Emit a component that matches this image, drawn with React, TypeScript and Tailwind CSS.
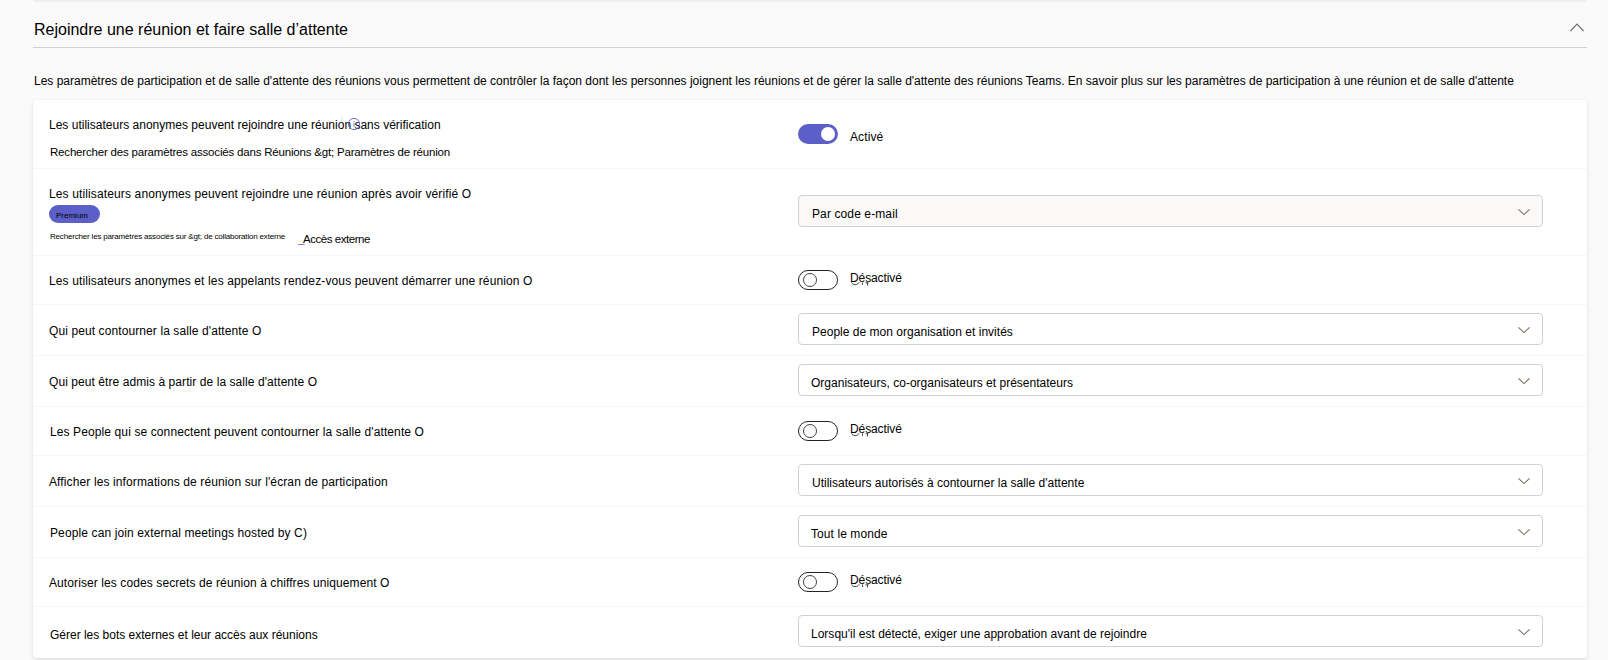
import { ReactNode } from 'react'
import clsx from 'clsx'

// 向下箭头
function ChevronDown() {
  return (
    <svg className="mt-[13px] h-[7px] w-3 shrink-0" viewBox="0 0 12 7" fill="none">
      <path d="M0.4 0.4 6 5.6 11.6 0.4" stroke="#7d716c" strokeWidth="1.1" />
    </svg>
  )
}

function Toggle({ on }: { on?: boolean }) {
  if (on) {
    return (
      <div className="flex h-5 w-10 items-center justify-end rounded-full bg-[#5b5fc7] pr-[3px]">
        <div className="h-3.5 w-3.5 rounded-full bg-white"></div>
      </div>
    )
  }
  return (
    <div className="flex h-5 w-10 items-center rounded-full border border-[#242424] pl-1">
      <div className="h-3.5 w-3.5 rounded-full border border-[#424242]"></div>
    </div>
  )
}

function ToggleField({ on }: { on?: boolean }) {
  if (on) {
    return (
      <div className="flex pt-6">
        <Toggle on />
        <span className="ml-3 pt-[5px] tracking-[0.1px]">Activé</span>
      </div>
    )
  }
  return (
    <div className="flex pt-3.5">
      <Toggle />
      <span className="relative ml-3 tracking-[-0.1px]">
        Désactivé
        <svg className="absolute top-[12px] left-[1px] h-[4px] w-[20px]" viewBox="0 0 20 4" fill="none">
          <path d="M0.5 0.3C1.5 3.3 6.5 3.6 8.2 0.3M11.5 0.5v2.4M16.5 0.5v3M14.5 0.8h3" stroke="#444" strokeWidth="1" />
        </svg>
      </span>
    </div>
  )
}

function Select({ value, className, disabled }: { value: string; className?: string; disabled?: boolean }) {
  return (
    <div
      className={clsx(
        'flex h-8 w-[745px] items-start justify-between rounded border border-[#d1d1d1] pr-3',
        disabled ? 'bg-[#faf9f8]' : 'bg-white'
      )}
    >
      <span className={clsx('pt-[10px]', className)}>{value}</span>
      <ChevronDown />
    </div>
  )
}

function Row({ label, className, children }: { label: ReactNode; className: string; children: ReactNode }) {
  return (
    <div className={clsx('flex items-start border-b border-[#f7f7f7] last:border-b-0', className)}>
      <div className="w-[765px] shrink-0">{label}</div>
      {children}
    </div>
  )
}

const settings = [
  {
    label: 'Les utilisateurs anonymes et les appelants rendez-vous peuvent démarrer une réunion O',
    labelClass: 'pt-[17px] pl-4 tracking-[0.125px]',
    height: 'h-[49px]'
  },
  {
    label: "Qui peut contourner la salle d'attente O",
    labelClass: 'pt-[18px] pl-4 tracking-[0.1px]',
    height: 'h-[51px]',
    value: 'People de mon organisation et invités',
    valueClass: 'pl-[13px] tracking-[0.02px]'
  },
  {
    label: "Qui peut être admis à partir de la salle d'attente O",
    labelClass: 'pt-[18px] pl-4 tracking-[0.07px]',
    height: 'h-[51px]',
    value: 'Organisateurs, co-organisateurs et présentateurs',
    valueClass: 'pl-3 tracking-[0.01px]'
  },
  {
    label: "Les People qui se connectent peuvent contourner la salle d'attente O",
    labelClass: 'pt-[17px] pl-[17px] tracking-[0.11px]',
    height: 'h-[49px]'
  },
  {
    label: "Afficher les informations de réunion sur l'écran de participation",
    labelClass: 'pt-[18px] pl-4 tracking-[0.12px]',
    height: 'h-[51px]',
    value: "Utilisateurs autorisés à contourner la salle d'attente",
    valueClass: 'pl-[13px] tracking-[0.01px]'
  },
  {
    label: 'People can join external meetings hosted by C)',
    labelClass: 'pt-[18px] pl-[17px] tracking-[0.12px]',
    height: 'h-[51px]',
    value: 'Tout le monde',
    valueClass: 'pl-3 tracking-[0.08px]'
  },
  {
    label: 'Autoriser les codes secrets de réunion à chiffres uniquement O',
    labelClass: 'pt-[17px] pl-4 tracking-[0.095px]',
    height: 'h-[49px]'
  },
  {
    label: 'Gérer les bots externes et leur accès aux réunions',
    labelClass: 'pt-5 pl-[17px] tracking-[-0.01px]',
    height: 'h-[51px]',
    value: "Lorsqu'il est détecté, exiger une approbation avant de rejoindre",
    valueClass: 'pl-3 tracking-[0.01px]'
  }
]

export default function App() {
  return (
    <div className="h-[660px] w-[1608px] overflow-hidden bg-[#fafafa] pr-[21px] pl-[33px] font-['Liberation_Sans',Arial,sans-serif] text-xs leading-4 whitespace-nowrap text-black">
      {/* 上一张卡片的阴影 */}
      <div className="h-px rounded-b bg-[#ededed] shadow-[0_1px_2px_rgba(0,0,0,0.06)]"></div>

      {/* 标题 */}
      <div className="flex h-[47px] items-start justify-between border-b border-[#d1d1d1] pr-[3px]">
        <h2 className="pt-[19px] pl-px text-base leading-5">Rejoindre une réunion et faire salle d’attente</h2>
        <svg className="mt-[22px] h-[9px] w-[14px]" viewBox="0 0 14 9" fill="none">
          <path d="M0.4 8 7 1.2 13.6 8" stroke="#707070" strokeWidth="1.2" />
        </svg>
      </div>

      <p className="h-[52px] pt-[25px] pl-px tracking-[-0.006px]">
        Les paramètres de participation et de salle d'attente des réunions vous permettent de contrôler la façon dont les
        personnes joignent les réunions et de gérer la salle d'attente des réunions Teams. En savoir plus sur les
        paramètres de participation à une réunion et de salle d'attente
      </p>

      {/* 设置列表 */}
      <div className="h-[558px] rounded bg-white shadow-[0_2px_4px_rgba(0,0,0,0.1),0_0_2px_rgba(0,0,0,0.04)]">
        <Row
          className="h-[69px]"
          label={
            <div className="relative pt-[17px] pl-4">
              <p className="tracking-[0.01px]">
                Les utilisateurs anonymes peuvent rejoindre une réunion sans vérification
              </p>
              <p className="mt-[11px] pl-px text-[11.5px] leading-4 tracking-[-0.19px]">
                Rechercher des paramètres associés dans Réunions &amp;gt; Paramètres de réunion
              </p>
              <svg className="absolute top-[17px] left-[308px] h-[14px] w-5" viewBox="0 0 20 14" fill="none">
                <path d="M0.5 0v4" stroke="#b5f5fa" />
                <circle cx="13" cy="7" r="5.6" stroke="#6d71cd" />
                <path d="M13 6.2v3.6M13 4v1.1" stroke="#6d71cd" />
              </svg>
            </div>
          }
        >
          <ToggleField on />
        </Row>
        <Row
          className="h-[87px]"
          label={
            <div className="pt-[17px] pl-4">
              <p className="tracking-[0.13px]">
                Les utilisateurs anonymes peuvent rejoindre une réunion après avoir vérifié O
              </p>
              <div className="mt-[3px] h-[18px] w-[51px] rounded-full bg-[#5b5fc7] pt-[6px] pl-[7px] text-[8px] leading-[10px]">
                Premium
              </div>
              <div className="mt-2 flex pl-px">
                <span className="w-[248px] pt-px text-[8px] leading-[10px] tracking-[-0.18px]">
                  Rechercher les paramètres associés sur &amp;gt; de collaboration externe
                </span>
                <span className="text-[11.5px] leading-4 tracking-[-0.46px]">
                  <span className="text-[#5b5fc7] tracking-[-1.4px]">_</span>Accès externe
                </span>
              </div>
            </div>
          }
        >
          <div className="pt-[26px]">
            <Select value="Par code e-mail" className="pl-[13px] tracking-[0.11px]" disabled />
          </div>
        </Row>
        {settings.map((item) => (
          <Row key={item.label} className={item.height} label={<p className={item.labelClass}>{item.label}</p>}>
            {item.value ? (
              <div className="pt-2">
                <Select value={item.value} className={item.valueClass} />
              </div>
            ) : (
              <ToggleField />
            )}
          </Row>
        ))}
      </div>
    </div>
  )
}
